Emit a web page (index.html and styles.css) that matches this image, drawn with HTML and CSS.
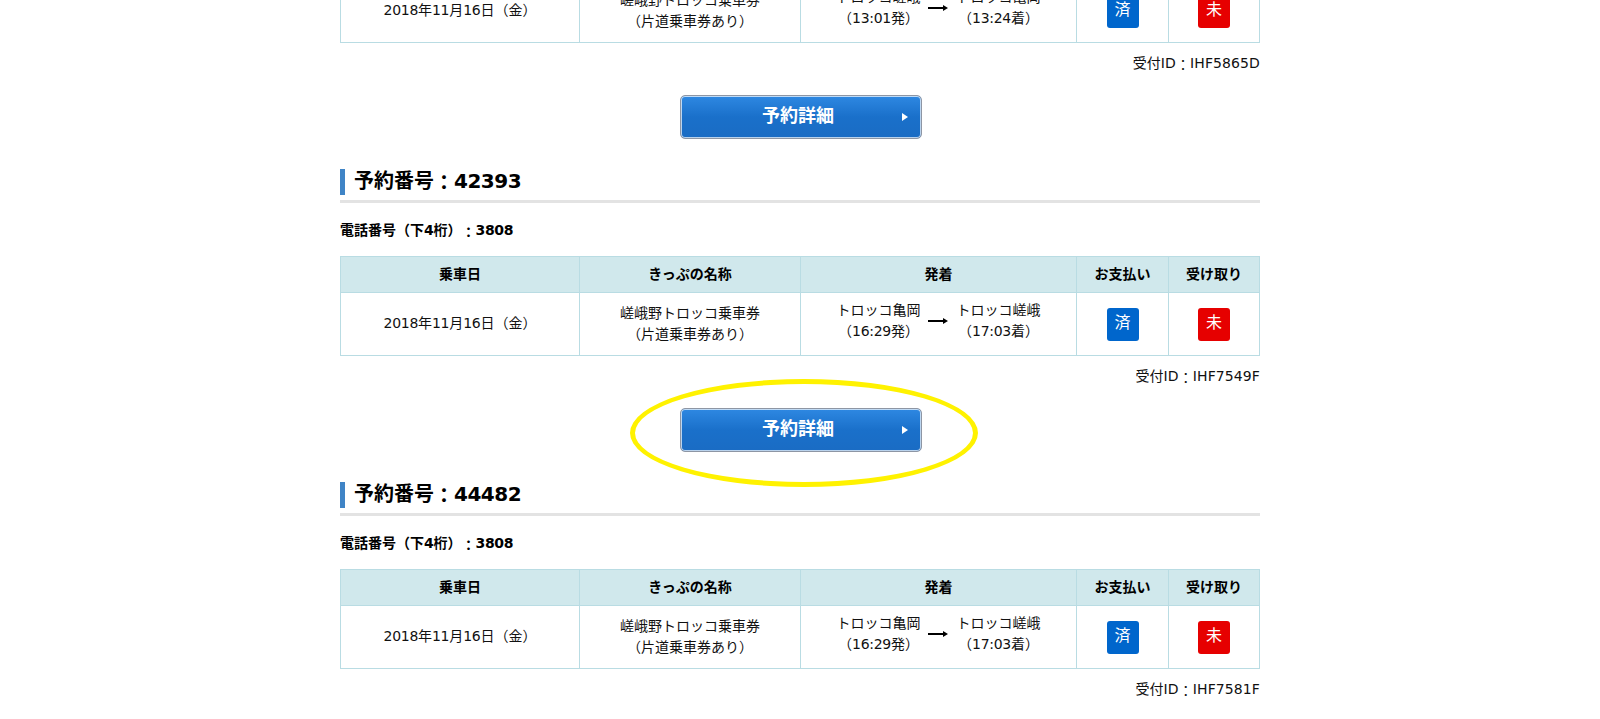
FILE: index.html
```html
<!DOCTYPE html>
<html lang="ja">
<head>
<meta charset="utf-8">
<title>予約一覧</title>
<link rel="stylesheet" href="styles.css">
</head>
<body>
<main class="page">
  <section class="booking">
    <h2 class="booking-title"><span class="booking-title-text">予約番号<span class="cjk">：</span><span class="num-lg">41875</span></span></h2>
    <p class="phone">電話番号（下<span class="num">4</span>桁）<span class="cjk">：</span><span class="num">3808</span></p>
    <table class="tickets">
      <colgroup><col class="col-date"><col class="col-name"><col class="col-route"><col class="col-pay"><col class="col-recv"></colgroup>
      <thead><tr><th>乗車日</th><th>きっぷの名称</th><th>発着</th><th>お支払い</th><th>受け取り</th></tr></thead>
      <tbody><tr>
        <td class="date-cell"><span class="num">2018</span>年<span class="num">11</span>月<span class="num">16</span>日（金）</td>
        <td>嵯峨野トロッコ乗車券<br>（片道乗車券あり）</td>
        <td><div class="route">
          <div class="stop">トロッコ嵯峨<br>（<span class="num">13:01</span>発）</div>
          <svg class="arrow" width="20" height="8" viewBox="0 0 20 8"><path d="M0 3h15V1L20 4l-5 3V5H0z" fill="#000"/></svg>
          <div class="stop">トロッコ亀岡<br>（<span class="num">13:24</span>着）</div>
        </div></td>
        <td><span class="badge badge-done">済</span></td>
        <td><span class="badge badge-todo">未</span></td>
      </tr></tbody>
    </table>
    <p class="receipt">受付ID<span class="cjk">：</span>IHF5865D</p>
    <div class="action"><a class="detail-btn" href="#"><span class="detail-label">予約詳細</span><i class="caret"></i></a></div>
  </section>

  <section class="booking">
    <h2 class="booking-title"><span class="booking-title-text">予約番号<span class="cjk">：</span><span class="num-lg">42393</span></span></h2>
    <p class="phone">電話番号（下<span class="num">4</span>桁）<span class="cjk">：</span><span class="num">3808</span></p>
    <table class="tickets">
      <colgroup><col class="col-date"><col class="col-name"><col class="col-route"><col class="col-pay"><col class="col-recv"></colgroup>
      <thead><tr><th>乗車日</th><th>きっぷの名称</th><th>発着</th><th>お支払い</th><th>受け取り</th></tr></thead>
      <tbody><tr>
        <td class="date-cell"><span class="num">2018</span>年<span class="num">11</span>月<span class="num">16</span>日（金）</td>
        <td>嵯峨野トロッコ乗車券<br>（片道乗車券あり）</td>
        <td><div class="route">
          <div class="stop">トロッコ亀岡<br>（<span class="num">16:29</span>発）</div>
          <svg class="arrow" width="20" height="8" viewBox="0 0 20 8"><path d="M0 3h15V1L20 4l-5 3V5H0z" fill="#000"/></svg>
          <div class="stop">トロッコ嵯峨<br>（<span class="num">17:03</span>着）</div>
        </div></td>
        <td><span class="badge badge-done">済</span></td>
        <td><span class="badge badge-todo">未</span></td>
      </tr></tbody>
    </table>
    <p class="receipt">受付ID<span class="cjk">：</span>IHF7549F</p>
    <div class="action"><a class="detail-btn" href="#"><span class="detail-label">予約詳細</span><i class="caret"></i></a><div class="highlight"></div></div>
  </section>

  <section class="booking">
    <h2 class="booking-title"><span class="booking-title-text">予約番号<span class="cjk">：</span><span class="num-lg">44482</span></span></h2>
    <p class="phone">電話番号（下<span class="num">4</span>桁）<span class="cjk">：</span><span class="num">3808</span></p>
    <table class="tickets">
      <colgroup><col class="col-date"><col class="col-name"><col class="col-route"><col class="col-pay"><col class="col-recv"></colgroup>
      <thead><tr><th>乗車日</th><th>きっぷの名称</th><th>発着</th><th>お支払い</th><th>受け取り</th></tr></thead>
      <tbody><tr>
        <td class="date-cell"><span class="num">2018</span>年<span class="num">11</span>月<span class="num">16</span>日（金）</td>
        <td>嵯峨野トロッコ乗車券<br>（片道乗車券あり）</td>
        <td><div class="route">
          <div class="stop">トロッコ亀岡<br>（<span class="num">16:29</span>発）</div>
          <svg class="arrow" width="20" height="8" viewBox="0 0 20 8"><path d="M0 3h15V1L20 4l-5 3V5H0z" fill="#000"/></svg>
          <div class="stop">トロッコ嵯峨<br>（<span class="num">17:03</span>着）</div>
        </div></td>
        <td><span class="badge badge-done">済</span></td>
        <td><span class="badge badge-todo">未</span></td>
      </tr></tbody>
    </table>
    <p class="receipt">受付ID<span class="cjk">：</span>IHF7581F</p>
  </section>
</main>
</body>
</html>
```
FILE: styles.css
```css
html, body {
  margin: 0;
  height: 719px;
  overflow: hidden;
  background: #fff;
}
body {
  font-family: "DejaVu Sans", "Noto Sans CJK JP", sans-serif;
  font-size: 14px;
  line-height: 21px;
  color: #111;
  text-spacing-trim: space-all;
}
.cjk {
  font-family: "Noto Sans CJK JP", sans-serif;
  line-height: 0;
  vertical-align: -0.12em;
}
.num {
  letter-spacing: -0.3px;
}
.num-lg {
  letter-spacing: -0.5px;
}
.page {
  width: 920px;
  margin: -144px auto 0;
}
.booking {
  padding-bottom: 30px;
}
.booking-title {
  margin: 0 0 17px;
  padding-bottom: 5px;
  border-bottom: 3px solid #e3e3e3;
  font-size: 20px;
  line-height: 24px;
  font-weight: 700;
  color: #000;
}
.booking-title-text {
  display: block;
  height: 26px;
  padding-left: 9px;
  border-left: 5px solid #3f84c6;
}
.phone {
  margin: 0 0 16px;
  height: 20px;
  line-height: 20px;
  font-weight: 700;
  color: #000;
}
.tickets {
  width: 919px;
  table-layout: fixed;
  border-collapse: collapse;
  text-align: center;
}
.col-date { width: 239px; }
.col-name { width: 221px; }
.col-route { width: 276px; }
.col-pay { width: 92px; }
.col-recv { width: 91px; }
.tickets th, .tickets td {
  border: 1px solid #b9dce3;
  padding: 0;
}
.tickets th {
  height: 35px;
  background: #d0e8ec;
  font-weight: 700;
  color: #000;
}
.tickets td {
  height: 62px;
}
.tickets .date-cell {
  height: 60px;
  padding-bottom: 2px;
}
.route {
  display: flex;
  justify-content: center;
  align-items: center;
  gap: 5px;
  padding: 0 0 6px;
}
.stop {
  width: 88px;
}
.arrow {
  flex: none;
  margin: 0 2px 0 0;
}
.badge {
  display: inline-block;
  width: 32px;
  height: 33px;
  border-radius: 3px;
  color: #fff;
  font-size: 16px;
  line-height: 30px;
  vertical-align: middle;
}
.badge-done { background: #0066cc; }
.badge-todo { background: #e60000; }
.receipt {
  margin: 10px 0 21px;
  height: 21px;
  text-align: right;
  letter-spacing: 0.1px;
}
.action {
  position: relative;
  width: 242px;
  margin: 0 0 0 340px;
}
.detail-btn {
  position: relative;
  display: flex;
  align-items: center;
  justify-content: center;
  box-sizing: border-box;
  width: 242px;
  height: 44px;
  padding: 0 6px 2px 0;
  border: 1px solid #8e96a4;
  border-radius: 5px;
  background: linear-gradient(#2e88e2, #1a70ca 50%, #1a6cc4);
  box-shadow: inset 0 0 0 1px rgba(255, 255, 255, 0.7);
  color: #fff;
  font-weight: 700;
  text-decoration: none;
}
.detail-label {
  font-size: 18px;
  line-height: 24px;
}
.caret {
  position: absolute;
  right: 13px;
  top: 17px;
  width: 0;
  height: 0;
  border-left: 6px solid #fff;
  border-top: 4px solid transparent;
  border-bottom: 4px solid transparent;
}
.highlight {
  position: absolute;
  left: -50px;
  top: -29px;
  width: 338px;
  height: 98px;
  border: 5px solid #fff200;
  border-radius: 50%;
  pointer-events: none;
}
```
